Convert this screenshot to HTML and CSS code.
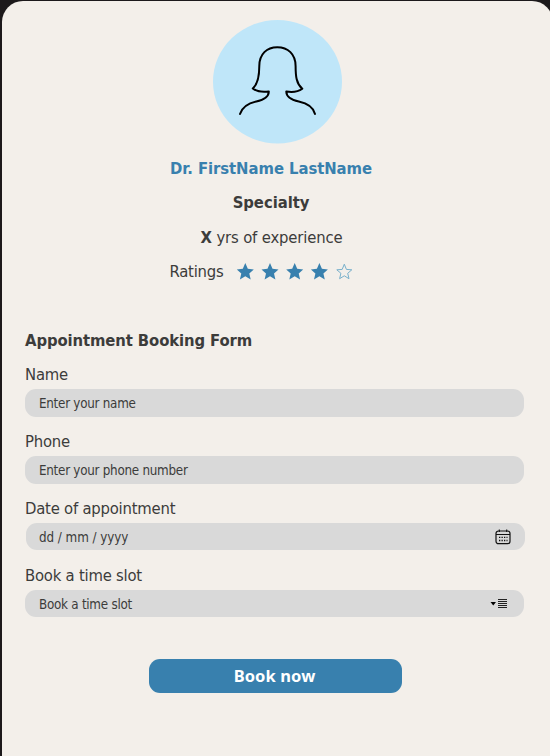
FILE: index.html
```html
<!DOCTYPE html>
<html lang="en">
<head>
<meta charset="utf-8">
<title>Appointment Booking</title>
<link rel="stylesheet" href="styles.css">
</head>
<body>
<main class="card">
  <section class="profile">
    <svg class="avatar" width="130" height="124" viewBox="0 0 130 124">
      <ellipse cx="64.500" cy="61.700" rx="64.500" ry="61.700" fill="#bfe6f9"/>
      <g fill="none" stroke="#000" stroke-width="2" stroke-linecap="round" stroke-linejoin="round" transform="translate(-.7 0)">
        <path d="M27.700 94C30 87 36 83.300 44 81.500C52 79.800 56.500 76 56.500 71.500C50 72.400 44.500 71.700 40.500 68.400C46 63.700 47 56 47 46C47 34 54.500 27.200 65 27.200S83.300 34 83.300 46C83.300 56 84 63.700 90 68.700C86 71.700 80.500 72.500 74 71.500C74 76 78.500 79.800 86.500 81.500C95 83.300 101 87 102.700 94"/>
      </g>
    </svg>
    <h1 class="doctor">Dr. FirstName LastName</h1>
    <p class="specialty">Specialty</p>
    <p class="experience"><b>X</b> yrs of experience</p>
    <div class="ratings">
      <span class="ratings-label">Ratings</span>
      <svg class="stars" width="120" height="20" viewBox="0 0 120 20">
        <defs><path id="star" d="M0-8.500L2.500-2.800L8.500-2.200L4 1.900L5.400 7.800L0 4.700L-5.400 7.800L-4 1.900L-8.500-2.200L-2.500-2.800Z"/></defs>
        <g fill="#3880ae">
          <use href="#star" x="9.300" y="9.600"/><use href="#star" x="34" y="9.600"/><use href="#star" x="58.700" y="9.600"/><use href="#star" x="83.400" y="9.600"/>
        </g>
        <path transform="translate(-.7 0)" d="M109 2.200L111.100 7.400L116.500 7.800L112.400 11.300L113.700 16.700L109 13.800L104.300 16.700L105.600 11.300L101.500 7.800L106.900 7.400Z" fill="none" stroke="#78b0cb" stroke-width="1"/>
      </svg>
    </div>
  </section>
  <form class="booking">
    <h2 class="form-title">Appointment Booking Form</h2>
    <div class="row"><label class="label">Name</label><div class="field"><span>Enter your name</span></div></div>
    <div class="row"><label class="label">Phone</label><div class="field"><span>Enter your phone number</span></div></div>
    <div class="row"><label class="label">Date of appointment</label><div class="field field-date"><span>dd / mm / yyyy</span>
      <svg class="calendar" width="16" height="16" viewBox="0 0 16 16">
        <rect x="1" y="2" width="14" height="12.700" rx="2.500" fill="none" stroke="#111" stroke-width="1.200"/>
        <path d="M1 5.500H15M4.300.500V3M11.700.500V3" stroke="#111" stroke-width="1.100"/>
        <path d="M4 8.400H12.500M4 11.500H12.500" stroke="#111" stroke-width="1.300" stroke-dasharray="1.300 1.200"/>
      </svg></div></div>
    <div class="row"><label class="label">Book a time slot</label><div class="field"><span>Book a time slot</span>
      <svg class="menu" width="18" height="12" viewBox="0 0 18 12">
        <path d="M0.500 4H6L3.250 7.500Z" fill="#000"/>
        <path d="M8 1.500H17M8 3.500H17M8 5.500H17M8 7.500H17M8 9.500H17" stroke="#222" stroke-width="1"/>
      </svg></div></div>
    <button class="submit" type="button">Book now</button>
  </form>
</main>
</body>
</html>
```
FILE: styles.css
```css
* { box-sizing: border-box; }
body {
  margin: 0;
  height: 756px;
  padding: 1px 0 0 2px;
  overflow: hidden;
  background: #1c191b;
  color: #3c3c3b;
  font-family: "DejaVu Sans Condensed", "DejaVu Sans", sans-serif;
  font-stretch: condensed;
  font-size: 16.500px;
  letter-spacing: -0.220px;
}
.card {
  width: 551px;
  height: 775px;
  padding: 19px 29px 0 23px;
  border-radius: 21px;
  background: #f3efea;
}
h1, h2, p { margin: 0; white-space: nowrap; }
.profile {
  display: flex;
  flex-direction: column;
  align-items: center;
  width: 491px;
  height: 309px;
}
.avatar { display: block; margin: 0 0 12.500px 14px; }
.doctor, .specialty, .experience, .ratings { height: 24px; line-height: 24px; margin-bottom: 10.500px; }
.doctor, .specialty, .form-title { font-size: 16.500px; font-weight: bold; letter-spacing: -0.050px; }
.doctor { color: #3880ae; padding-left: 1px; }
.specialty { padding-left: 1px; }
.experience { padding-left: 2px; letter-spacing: -0.150px; }
.ratings { display: flex; align-items: center; gap: 12px; margin-right: 16px; }
.booking { display: flex; flex-direction: column; width: 499px; }
.form-title { height: 24px; line-height: 24px; margin-bottom: 9.400px; letter-spacing: -0.100px; }
.row { height: 66.800px; }
.label { display: block; height: 27px; line-height: 26.500px; }
.label, .field span { white-space: nowrap; }
.field {
  display: flex;
  align-items: center;
  justify-content: space-between;
  height: 27.500px;
  padding: 0 14px;
  border-radius: 11px;
  background: #d9d9d9;
  font-size: 13.300px;
  letter-spacing: -0.260px;
}
.field span { padding-top: 1px; }
.field-date { margin: 0 -0.500px 0 0.500px; padding: 0 13.500px; letter-spacing: -0.050px; }
.calendar { margin-top: 1px; }
.menu { margin-right: 2px; }
.submit {
  width: 253px;
  height: 34px;
  margin: 29.400px 0 0 124px;
  padding: 0 2px 0 0;
  border: 0;
  border-radius: 11px;
  background: #3880ae;
  color: #fff;
  font: bold 16.500px/34px "Noto Sans", sans-serif;
  letter-spacing: 0.100px;
}
```
